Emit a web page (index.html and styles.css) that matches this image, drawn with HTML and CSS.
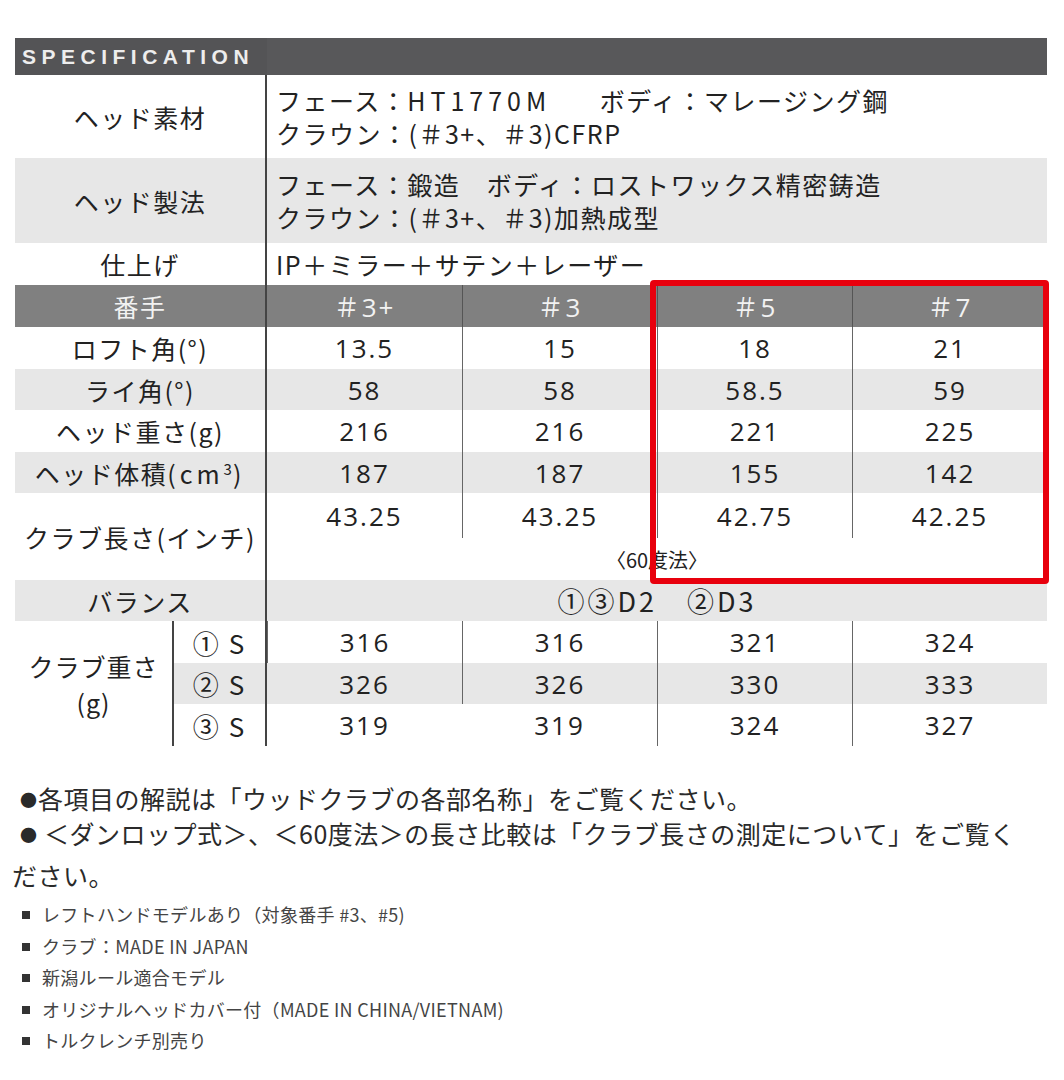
FILE: index.html
```html
<!DOCTYPE html>
<html lang="ja">
<head>
<meta charset="utf-8">
<title>SPECIFICATION</title>
<link rel="stylesheet" href="styles.css">
</head>
<body>
<div class="page">
  <section class="spec">
    <div class="spec-title">
      <div class="title-cell">SPECIFICATION</div>
      <div class="title-rest"></div>
    </div>

    <div class="trow tall">
      <div class="label">ヘッド素材</div>
      <div class="tval"><span>フェース：<span class="lat">HT1770M</span>　ボディ：マレージング鋼</span><span>クラウン：(＃3+、＃3)CFRP</span></div>
    </div>
    <div class="trow tall2 alt">
      <div class="label">ヘッド製法</div>
      <div class="tval"><span>フェース：鍛造　ボディ：ロストワックス精密鋳造</span><span>クラウン：(＃3+、＃3)加熱成型</span></div>
    </div>
    <div class="trow short">
      <div class="label">仕上げ</div>
      <div class="tval"><span>IP＋ミラー＋サテン＋レーザー</span></div>
    </div>

    <div class="nrow head">
      <div class="label">番手</div>
      <div class="num">＃3+</div>
      <div class="num">＃3</div>
      <div class="num">＃5</div>
      <div class="num">＃7</div>
    </div>
    <div class="nrow">
      <div class="label">ロフト角(°)</div>
      <div class="num">13.5</div><div class="num">15</div><div class="num">18</div><div class="num">21</div>
    </div>
    <div class="nrow alt">
      <div class="label">ライ角(°)</div>
      <div class="num">58</div><div class="num">58</div><div class="num">58.5</div><div class="num">59</div>
    </div>
    <div class="nrow">
      <div class="label">ヘッド重さ(g)</div>
      <div class="num">216</div><div class="num">216</div><div class="num">221</div><div class="num">225</div>
    </div>
    <div class="nrow alt">
      <div class="label">ヘッド体積<span class="unit">(cm<sup>3</sup>)</span></div>
      <div class="num">187</div><div class="num">187</div><div class="num">155</div><div class="num">142</div>
    </div>
    <div class="nrow length">
      <div class="label">クラブ長さ(インチ)</div>
      <div class="num">43.25</div><div class="num">43.25</div><div class="num">42.75</div><div class="num">42.25</div>
      <div class="method">〈60度法〉</div>
    </div>
    <div class="nrow alt">
      <div class="label">バランス</div>
      <div class="merged">①③D2　②D3</div>
    </div>
    <div class="weights">
      <div class="wlabel">クラブ重さ<br>(g)</div>
      <div class="sub">① S</div>
      <div class="num">316</div><div class="num">316</div><div class="num">321</div><div class="num">324</div>
      <div class="sub alt">② S</div>
      <div class="num alt">326</div><div class="num alt">326</div><div class="num alt">330</div><div class="num alt">333</div>
      <div class="sub">③ S</div>
      <div class="num">319</div><div class="num">319</div><div class="num">324</div><div class="num">327</div>
    </div>

    <div class="highlight"></div>
  </section>

  <div class="notes">
    <p class="note1"><span class="dot">●</span>各項目の解説は「ウッドクラブの各部名称」をご覧ください。</p>
    <p class="note2"><span class="dot">●</span> ＜ダンロップ式＞、＜60度法＞の長さ比較は「クラブ長さの測定について」をご覧く<br>ださい。</p>
    <ul class="facts">
      <li>レフトハンドモデルあり（対象番手 #3、#5)</li>
      <li>クラブ：MADE IN JAPAN</li>
      <li>新潟ルール適合モデル</li>
      <li>オリジナルヘッドカバー付（MADE IN CHINA/VIETNAM)</li>
      <li>トルクレンチ別売り</li>
    </ul>
  </div>
</div>
</body>
</html>
```

FILE: styles.css
```css
* { box-sizing: border-box; }

body {
  margin: 0;
  background: #ffffff;
  color: #222222;
  font-family: "Noto Sans CJK JP", "Noto Sans", sans-serif;
}

.page {
  padding-top: 38px;
}

.spec {
  position: relative;
  width: 1032px;
  margin-left: 15px;
}

.spec-title {
  display: grid;
  grid-template-columns: 252px 1fr;
  height: 37px;
  background: #58585a;
}

.title-cell {
  display: flex;
  align-items: center;
  padding-left: 7px;
  background: #545456;
  color: #ededed;
  font-family: "Liberation Sans", Arial, sans-serif;
  font-weight: 700;
  font-size: 21px;
  letter-spacing: 5.5px;
}

.trow {
  display: grid;
  grid-template-columns: 252px 1fr;
}
.trow.tall { height: 83px; }
.trow.tall2 { height: 85px; }
.trow.short { height: 42px; }

.alt { background: #e7e7e7; }

.label {
  display: flex;
  align-items: center;
  justify-content: center;
  font-size: 25px;
  letter-spacing: 1.5px;
  border-right: 2px solid #444444;
  white-space: nowrap;
}
.label .unit { letter-spacing: 4px; }
.label sup {
  font-size: 15px;
  line-height: 0;
  vertical-align: 9px;
  letter-spacing: 1px;
}

.tval {
  display: flex;
  flex-direction: column;
  justify-content: center;
  padding-left: 9px;
  font-size: 25px;
  line-height: 33px;
  letter-spacing: 1.5px;
  white-space: nowrap;
}
.lat {
  letter-spacing: 5px;
  margin-right: 22px;
}

.nrow {
  display: grid;
  grid-template-columns: 252px repeat(4, 195px);
  height: 42px;
}

.nrow.head {
  background: #808080;
  color: #f2f2f2;
}
.nrow.head .num + .num { border-left-color: #555555; }

.num {
  display: flex;
  align-items: center;
  justify-content: center;
  font-family: "Open Sans", "Noto Sans CJK JP", sans-serif;
  font-size: 26px;
  letter-spacing: 2px;
}
.nrow .num + .num { border-left: 1px solid #666666; }

.nrow.length {
  height: 87px;
  grid-template-rows: 45px 1fr;
}
.nrow.length .label { grid-row: 1 / 3; }
.method {
  grid-column: 2 / 6;
  display: flex;
  align-items: center;
  justify-content: center;
  font-size: 20px;
}

.merged {
  grid-column: 2 / 6;
  display: flex;
  align-items: center;
  justify-content: center;
  font-size: 27px;
  letter-spacing: 3px;
}
.nrow.alt { height: 41px; }

.weights {
  display: grid;
  grid-template-columns: 157px 95px repeat(4, 195px);
  grid-template-rows: 42px 41px 42px;
}
.wlabel {
  grid-row: 1 / 4;
  display: flex;
  align-items: center;
  justify-content: center;
  text-align: center;
  font-size: 25px;
  letter-spacing: 1px;
  line-height: 36px;
}
.sub {
  display: flex;
  align-items: center;
  justify-content: center;
  font-size: 26px;
  letter-spacing: 2px;
  border-left: 2px solid #444444;
  border-right: 2px solid #444444;
}
.weights .num:nth-child(6n+3),
.weights .num:nth-child(6n+4),
.weights .num:nth-child(6n+5),
.weights .num:nth-child(6n+6) { border-left: 1px solid #666666; }

.highlight {
  position: absolute;
  left: 635px;
  top: 242px;
  width: 399px;
  height: 304px;
  border: 6px solid #e8000d;
  border-radius: 4px;
  pointer-events: none;
}

.notes {
  margin-left: 12px;
  padding-top: 34px;
  color: #2a2a2a;
}
.notes p {
  margin: 0;
  font-size: 25px;
  letter-spacing: 0.5px;
  white-space: nowrap;
}
.dot {
  display: inline-block;
  width: 26px;
  padding-left: 8px;
  font-size: 17px;
  vertical-align: 2px;
}
.note1 { line-height: 36px; }
.notes .note2 { line-height: 41px; margin-top: -5px; }

.facts {
  list-style: none;
  margin: 3px 0 0;
  padding: 0 0 0 10px;
  font-size: 18px;
  letter-spacing: 0.3px;
  line-height: 31.5px;
  color: #444444;
}
.facts li::before {
  content: "";
  display: inline-block;
  width: 8px;
  height: 8px;
  background: #333333;
  margin-right: 12px;
  vertical-align: 3px;
}
```
